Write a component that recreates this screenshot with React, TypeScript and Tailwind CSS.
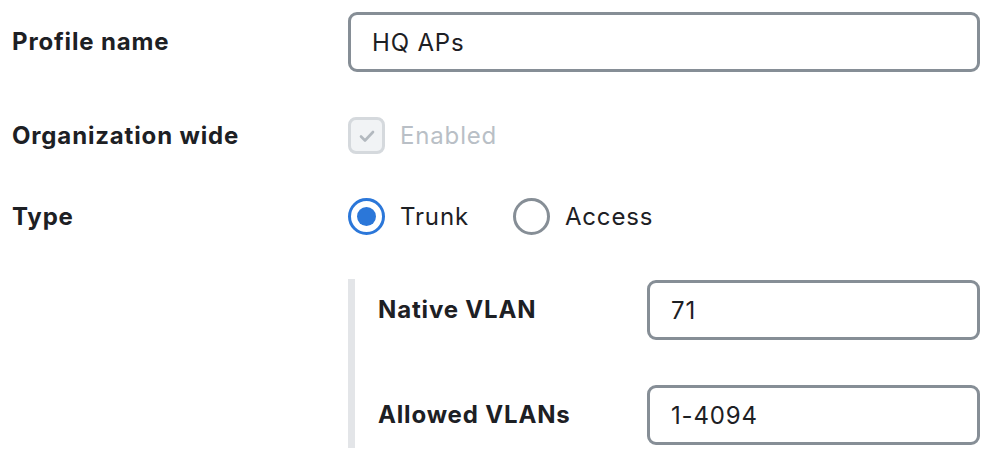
import { useState } from "react";

function TextInput({ value }: { value: string }) {
  return (
    <input
      defaultValue={value}
      className="h-[60px] w-full rounded-[9px] border-[3px] border-[#868e96] bg-white px-[21px] text-[24px] tracking-[0.035em] text-[#1d2024] outline-none"
    />
  );
}

function Radio({ checked, label, onClick }: { checked: boolean; label: string; onClick: () => void }) {
  return (
    <button type="button" onClick={onClick} className="flex items-center gap-[15px]">
      {checked ? (
        <span className="flex h-[37px] w-[37px] items-center justify-center rounded-full border-[3px] border-[#2b77d9] bg-white">
          <span className="h-[19px] w-[19px] rounded-full bg-[#2b77d9]" />
        </span>
      ) : (
        <span className="h-[37px] w-[37px] rounded-full border-[3px] border-[#868e96] bg-white" />
      )}
      <span className="text-[24px] tracking-[0.035em] text-[#1d2024]">{label}</span>
    </button>
  );
}

export default function App() {
  const [type, setType] = useState("trunk");

  return (
    <div className="min-h-screen bg-white pl-[12px] pr-[18px] pt-[12px] font-['Inter',sans-serif]">
      {/* Profile name */}
      <div className="flex items-center">
        <label className="w-[336px] shrink-0 text-[24px] font-bold tracking-[0.035em] text-[#1d2024]">Profile name</label>
        <TextInput value="HQ APs" />
      </div>

      {/* Organization wide */}
      <div className="mt-[45px] flex h-[37px] items-center">
        <label className="w-[336px] shrink-0 text-[24px] font-bold tracking-[0.035em] text-[#1d2024]">Organization wide</label>
        <div className="flex items-center gap-[15px]">
          <span className="flex h-[37px] w-[37px] items-center justify-center rounded-[8px] border-[3px] border-[#d5d9dd] bg-[#f1f3f5]">
            <svg width="20" height="20" viewBox="0 0 20 20" fill="none">
              <path d="M4 10.5l4 4 8-8.5" stroke="#b3b9bf" strokeWidth="2.6" strokeLinecap="round" strokeLinejoin="round" />
            </svg>
          </span>
          <span className="text-[24px] tracking-[0.035em] text-[#b9bfc6]">Enabled</span>
        </div>
      </div>

      {/* Type */}
      <div className="mt-[44px] flex h-[37px] items-center">
        <label className="w-[336px] shrink-0 text-[24px] font-bold tracking-[0.035em] text-[#1d2024]">Type</label>
        <div className="flex items-center gap-[44px]">
          <Radio checked={type === "trunk"} label="Trunk" onClick={() => setType("trunk")} />
          <Radio checked={type === "access"} label="Access" onClick={() => setType("access")} />
        </div>
      </div>

      {/* Trunk settings */}
      <div className="mt-[44px] ml-[336px] flex flex-col gap-[45px] border-l-[7px] border-[#e3e5e8] pb-[3px] pl-[23px] pt-[1px]">
        <div className="flex items-center">
          <label className="w-[269px] shrink-0 text-[24px] font-bold tracking-[0.035em] text-[#1d2024]">Native VLAN</label>
          <TextInput value="71" />
        </div>
        <div className="flex items-center">
          <label className="w-[269px] shrink-0 text-[24px] font-bold tracking-[0.035em] text-[#1d2024]">Allowed VLANs</label>
          <TextInput value="1-4094" />
        </div>
      </div>
    </div>
  );
}
